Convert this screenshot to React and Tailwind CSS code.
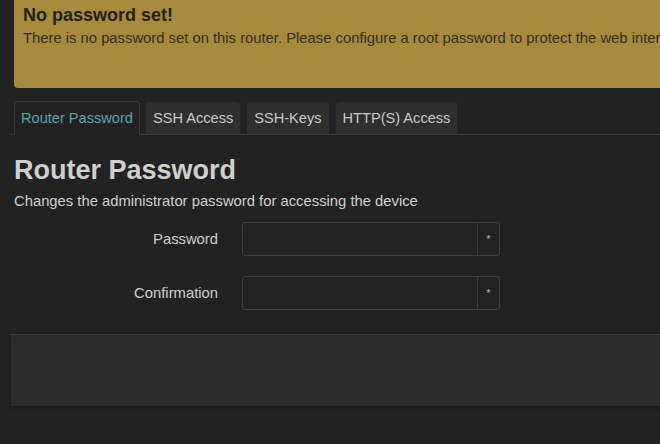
const tabs = ["Router Password", "SSH Access", "SSH-Keys", "HTTP(S) Access"];

const PasswordField = ({ label }) => (
  <div className="flex items-center h-[34px]">
    <label className="w-[204px] text-right text-[14.8px] text-[#cfcfcf]">{label}</label>
    <div className="ml-[24px] flex w-[258px] h-[34px] rounded-[3px] border border-[#414141] bg-[#232323]">
      <input type="password" className="flex-1 bg-transparent outline-none px-2 text-[#ddd]" />
      <div className="w-[22px] border-l border-[#3c3c3c] flex items-center justify-center text-[11px] text-[#bbb]">
        *
      </div>
    </div>
  </div>
);

export default function App() {
  return (
    <div
      className="w-[660px] h-[444px] overflow-hidden bg-[#222222]"
      style={{ fontFamily: '"Liberation Sans", Arial, sans-serif' }}
    >
      <div className="ml-[14px] -mt-[10px] h-[98px] w-[720px] rounded-bl-[4px] bg-[#a68b3c] pl-[9px] pt-[13px]">
        <h3 className="text-[18px] font-bold leading-[24px] text-[#221f14]">No password set!</h3>
        <p className="whitespace-nowrap text-[14.8px] text-[#332e1c]">
          There is no password set on this router. Please configure a root password to protect the web interface.
        </p>
      </div>

      <div className="mt-[13px] ml-[10px] flex items-end gap-[5px] border-b border-[#3a3a3a] pl-[4px]">
        {tabs.map((t, i) => (
          <div
            key={t}
            className={
              i === 0
                ? "-mb-px h-[34px] rounded-t-[4px] border border-b-0 border-[#383838] bg-[#222222] px-[6px] pt-[6px] text-[14.6px] text-[#54a6b4]"
                : "h-[33px] rounded-t-[4px] border border-b-0 border-[#262626] bg-[#2f2f2f] px-[7px] pt-[6px] text-[14.6px] text-[#c8c8c8]"
            }
          >
            {t}
          </div>
        ))}
      </div>

      <div className="px-[14px]">
        <h2 className="mt-[20px] text-[27px] font-bold leading-[30px] text-[#cfcfcf]">Router Password</h2>
        <p className="mt-[5px] text-[14.8px] text-[#cfcfcf]">Changes the administrator password for accessing the device</p>
        <div className="mt-[10px] flex flex-col gap-[20px]">
          <PasswordField label="Password" />
          <PasswordField label="Confirmation" />
        </div>
      </div>

      <div className="mt-[24px] ml-[11px] h-[72px] border-t border-[#3d3d3d] bg-[#2c2c2c] shadow-[0_1px_3px_rgba(0,0,0,0.5)]" />
    </div>
  );
}
